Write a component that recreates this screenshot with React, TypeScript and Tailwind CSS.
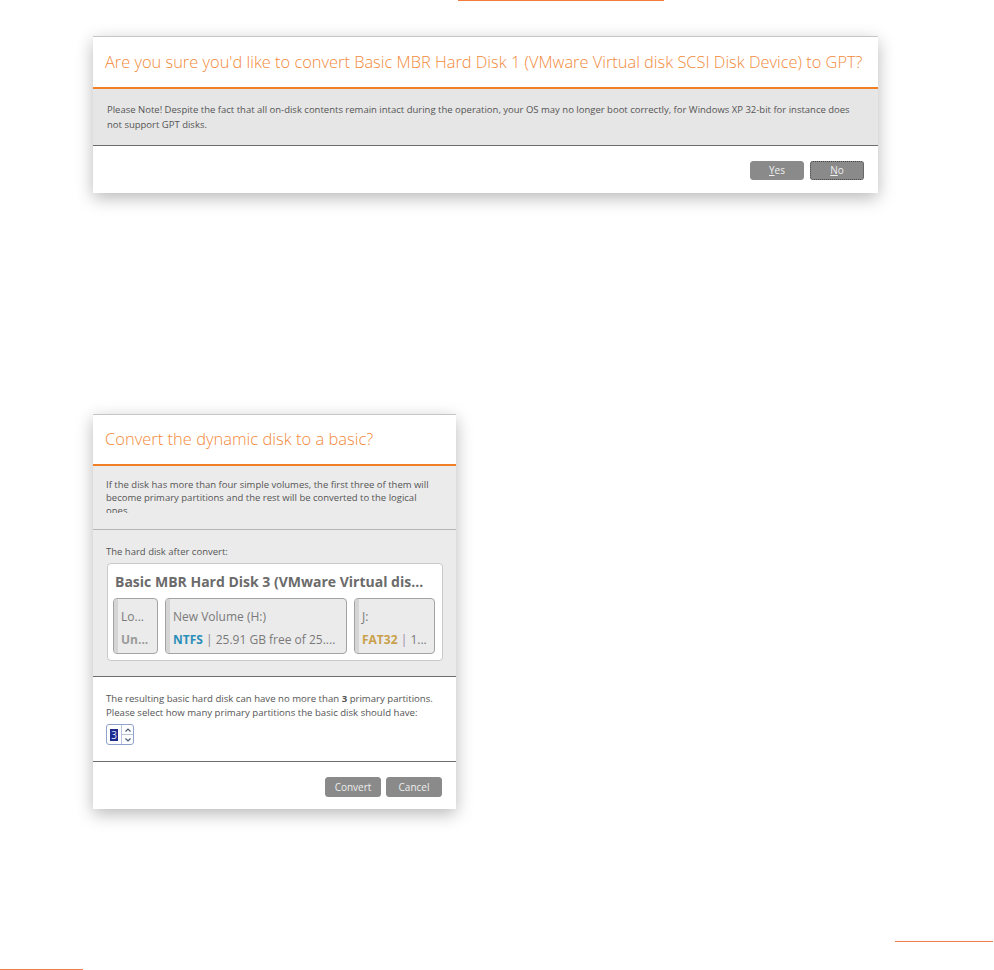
const font = "font-['Open_Sans','Noto_Sans',sans-serif]";

function GreyButton({ children, focused }: { children: React.ReactNode; focused?: boolean }) {
  return (
    <button
      className={`flex items-center justify-center rounded-[3px] bg-[#8a8a8a] text-[10px] text-[#eeeeee] ${
        focused ? 'border border-dotted border-[#444]' : 'border border-[#8a8a8a]'
      }`}
    >
      {children}
    </button>
  );
}

function Partition({
  width,
  label,
  fs,
  rest,
  fsColor,
  pipeColor,
}: {
  width: string;
  label: string;
  fs: string;
  rest?: string;
  fsColor: string;
  pipeColor?: string;
}) {
  return (
    <div className={`flex h-[56px] ${width} overflow-hidden rounded-[4px] border border-[#a3a3a3] bg-[#ebebeb]`}>
      <div className="w-[4px] bg-[#d5d5d5]" />
      <div className="flex flex-col gap-[7px] pl-[3px] pt-[10px] text-[12px] leading-[16px] whitespace-nowrap">
        <span className="text-[#7a7a7a]">{label}</span>
        <span>
          <span className={`font-bold ${fsColor}`}>{fs}</span>
          {rest && (
            <>
              <span className={pipeColor ?? 'text-[#8a8a8a]'}> | </span>
              <span className="text-[#7a7a7a]">{rest}</span>
            </>
          )}
        </span>
      </div>
    </div>
  );
}

function Spinner() {
  return (
    <div className="flex h-[21px] w-[28px] overflow-hidden rounded-[3px] border border-[#8fa2cc] bg-white">
      <div className="flex w-[15px] items-center justify-center">
        <span className="bg-[#1e2a8e] px-px text-[10px] leading-[12px] text-[#dfe4ff]">3</span>
      </div>
      <div className="flex w-[12px] flex-col border-l border-[#b7c2dc]">
        <div className="flex flex-1 items-center justify-center border-b border-[#b7c2dc]">
          <svg width="6" height="4" viewBox="0 0 6 4">
            <path d="M0.5 3.5 L3 1 L5.5 3.5" fill="none" stroke="#4a5a7a" strokeWidth="1.2" />
          </svg>
        </div>
        <div className="flex flex-1 items-center justify-center">
          <svg width="6" height="4" viewBox="0 0 6 4">
            <path d="M0.5 0.5 L3 3 L5.5 0.5" fill="none" stroke="#4a5a7a" strokeWidth="1.2" />
          </svg>
        </div>
      </div>
    </div>
  );
}

export default function App() {
  return (
    <div className={`flex h-[970px] w-[994px] flex-col overflow-hidden bg-white ${font}`}>
      <div className="ml-[458px] h-px w-[206px] bg-[#f47b3a]" />

      {/* Convert to GPT */}
      <div className="ml-[93px] mt-[35px] w-[785px] border-t border-[#c6c6c6] bg-white shadow-[0_5px_16px_rgba(0,0,0,0.28)]">
        <div className="flex h-[52px] items-center border-b-2 border-[#f07f26] px-[12px]">
          <h2 className="text-[16.4px] font-light whitespace-nowrap text-[#f2893a]">
            Are you sure you'd like to convert Basic MBR Hard Disk 1 (VMware Virtual disk SCSI Disk Device) to GPT?
          </h2>
        </div>
        <div className="h-[57px] border-b border-[#6d6d6d] bg-[#e6e6e6] px-[14px] pt-[13px] text-[9.5px] leading-[15px] text-[#555]">
          Please Note! Despite the fact that all on-disk contents remain intact during the operation, your OS may no longer boot correctly, for Windows XP 32-bit for instance does
          <br />
          not support GPT disks.
        </div>
        <div className="flex h-[47px] justify-end gap-[6px] pr-[14px] pt-[15px]">
          <div className="flex h-[19px] w-[54px]">
            <GreyButton>
              <span className="w-[52px]">
                <span className="underline">Y</span>es
              </span>
            </GreyButton>
          </div>
          <div className="flex h-[19px] w-[54px]">
            <GreyButton focused>
              <span className="w-[52px]">
                <span className="underline">N</span>o
              </span>
            </GreyButton>
          </div>
        </div>
      </div>

      {/* Dynamic to basic */}
      <div className="ml-[93px] mt-[221px] w-[363px] border-t border-[#c6c6c6] bg-white shadow-[0_5px_16px_rgba(0,0,0,0.28)]">
        <div className="flex h-[51px] items-center border-b-2 border-[#f07f26] px-[12px]">
          <h2 className="text-[16.5px] font-light text-[#f2893a]">Convert the dynamic disk to a basic?</h2>
        </div>
        <div className="border-b border-[#b5b5b5] bg-[#ebebeb] px-[13px] pb-[16px] pt-[12px]">
          <p className="h-[35px] overflow-hidden text-[9.5px] leading-[13px] text-[#555]">
            If the disk has more than four simple volumes, the first three of them will
            <br />
            become primary partitions and the rest will be converted to the logical
            <br />
            ones.
          </p>
        </div>
        <div className="border-b border-[#6d6d6d] bg-[#ebebeb] px-[13px] pb-[15px] pt-[15px]">
          <p className="text-[9.5px] leading-[13px] text-[#555]">The hard disk after convert:</p>
          <div className="ml-px mt-[5px] rounded-[4px] border border-[#c9c9c9] bg-white px-[5px] pb-[6px] pt-[9px]">
            <div className="pl-[2px] text-[14px] font-bold leading-[18px] whitespace-nowrap text-[#6b6b6b]">
              Basic MBR Hard Disk 3 (VMware Virtual dis...
            </div>
            <div className="mt-[7px] flex gap-[7px]">
              <Partition width="w-[45px]" label="Lo..." fs="Un..." fsColor="text-[#9a9a9a]" />
              <Partition
                width="w-[182px]"
                label="New Volume (H:)"
                fs="NTFS"
                rest="25.91 GB free of 25...."
                fsColor="text-[#2b8fb9]"
              />
              <Partition
                width="w-[81px]"
                label="J:"
                fs="FAT32"
                rest="1..."
                fsColor="text-[#c9a04c]"
                pipeColor="text-[#9c7ea6]"
              />
            </div>
          </div>
        </div>
        <div className="border-b border-[#6d6d6d] px-[13px] pb-[16px] pt-[15px]">
          <p className="text-[9.6px] leading-[14px] text-[#555]">
            The resulting basic hard disk can have no more than <span className="font-bold">3</span> primary partitions.
            <br />
            Please select how many primary partitions the basic disk should have:
          </p>
          <div className="mt-[4px]">
            <Spinner />
          </div>
        </div>
        <div className="flex h-[47px] justify-end gap-[5px] pr-[14px] pt-[15px]">
          <div className="flex h-[20px] w-[56px]">
            <GreyButton>
              <span className="w-[54px]">Convert</span>
            </GreyButton>
          </div>
          <div className="flex h-[20px] w-[56px]">
            <GreyButton>
              <span className="w-[54px]">Cancel</span>
            </GreyButton>
          </div>
        </div>
      </div>

      <div className="ml-[895px] mt-[132px] h-px w-[98px] bg-[#ef7d4a]" />
      <div className="mt-[27px] h-px w-[83px] bg-[#ef7d4a]" />
    </div>
  );
}
